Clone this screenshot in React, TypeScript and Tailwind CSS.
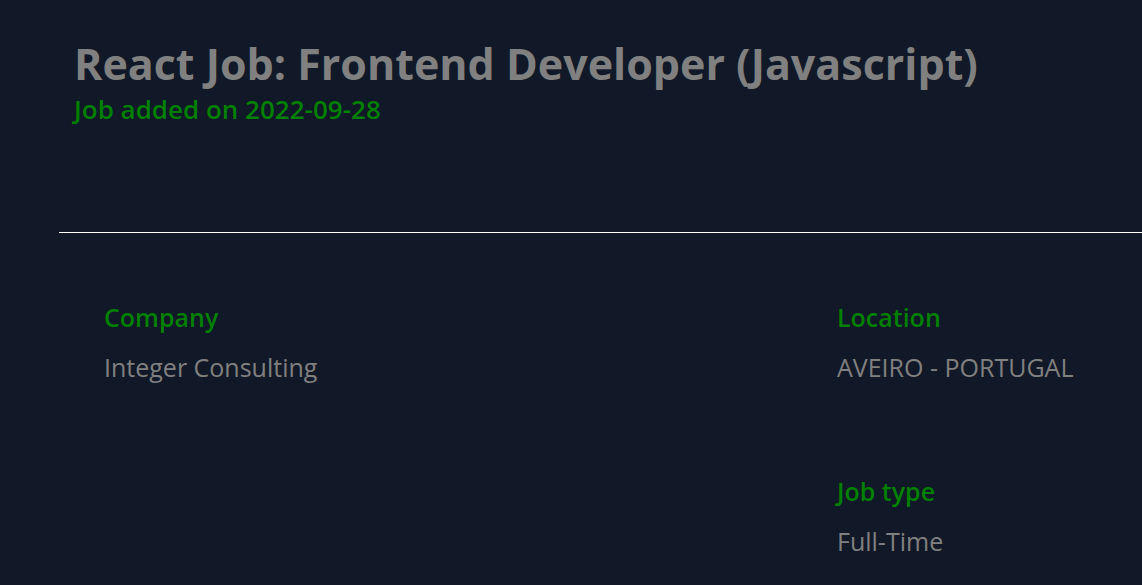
export default function App() {
  return (
    <div className="min-h-[585px] w-full bg-[#111827] font-['Open_Sans',sans-serif] overflow-hidden">
      <JobHeader />
      <hr className="ml-[59px] border-0 border-t border-white" />
      <JobDetails />
    </div>
  );
}

function JobHeader() {
  return (
    <header className="pl-[74px] pt-[39px] h-[232px]">
      <h1 className="text-[43px] leading-[50px] font-bold text-[#808080]">
        React Job: Frontend Developer (Javascript)
      </h1>
      <p className="text-[26px] leading-[40px] font-semibold text-[#008000]">Job added on 2022-09-28</p>
    </header>
  );
}

function JobDetails() {
  const left = [{ label: "Company", value: "Integer Consulting" }];
  const right = [
    { label: "Location", value: "AVEIRO - PORTUGAL" },
    { label: "Job type", value: "Full-Time" },
  ];

  return (
    <section className="flex pt-[68px] pl-[104px]">
      <div className="w-[733px] flex flex-col gap-[92px]">
        {left.map((item) => (
          <DetailItem key={item.label} label={item.label} value={item.value} />
        ))}
      </div>
      <div className="flex flex-col gap-[92px]">
        {right.map((item) => (
          <DetailItem key={item.label} label={item.label} value={item.value} />
        ))}
      </div>
    </section>
  );
}

function DetailItem({ label, value }: { label: string; value: string }) {
  return (
    <div className="flex flex-col gap-[18px]">
      <h3 className="text-[25px] leading-[32px] font-semibold text-[#008000]">{label}</h3>
      <p className="text-[25px] leading-[32px] text-[#808080]">{value}</p>
    </div>
  );
}
